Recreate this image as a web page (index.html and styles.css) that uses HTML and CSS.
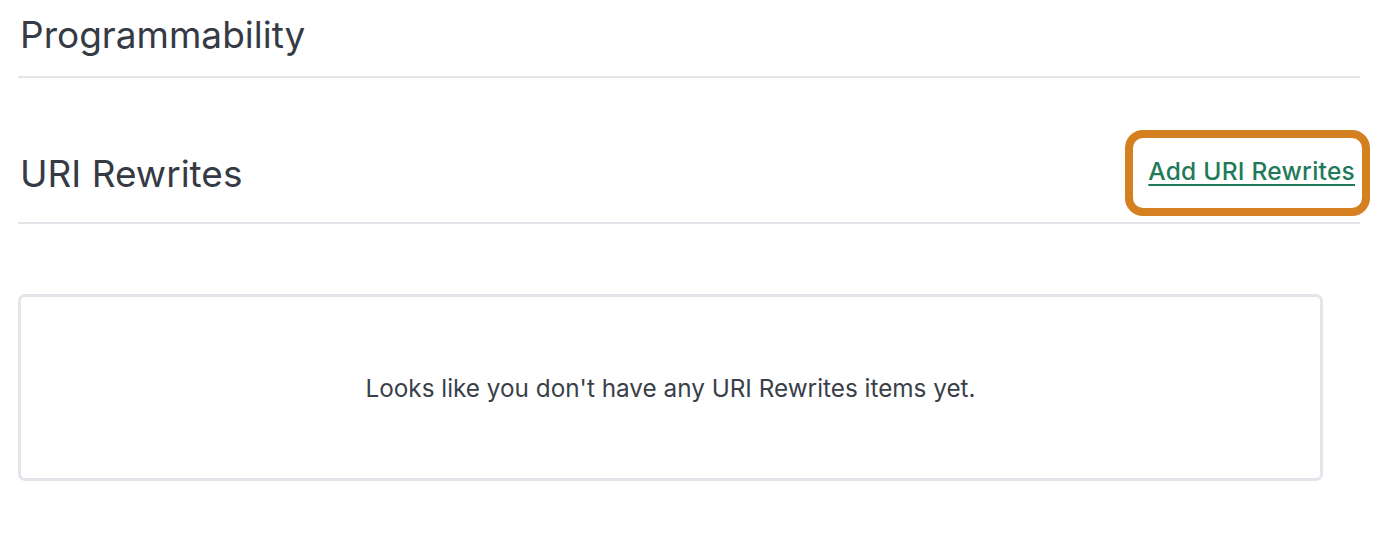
FILE: index.html
```html
<!DOCTYPE html>
<html>
<head>
<meta charset="utf-8">
<link rel="stylesheet" href="styles.css">
</head>
<body>
<div class="page">
  <div class="section-head first">
    <h2 class="title">Programmability</h2>
  </div>
  <div class="section-head second">
    <h2 class="title">URI Rewrites</h2>
    <a class="add-link" href="#">Add URI Rewrites</a>
  </div>
  <div class="empty-box">
    <p class="empty-text">Looks like you don't have any URI Rewrites items yet.</p>
  </div>
</div>
</body>
</html>
```
FILE: styles.css
```css
html, body {
  margin: 0;
  padding: 0;
  background: #ffffff;
}
.page {
  width: 1342px;
  margin-left: 18px;
  font-family: "Inter", "Liberation Sans", sans-serif;
  color: #353a45;
}
.section-head {
  display: flex;
  align-items: center;
  justify-content: space-between;
  border-bottom: 2px solid #e2e5e9;
}
.section-head.first {
  height: 76px;
  align-items: flex-start;
}
.section-head.first .title {
  margin-top: 11px;
}
.section-head.second {
  margin-top: 48px;
  height: 96px;
}
.title {
  margin: 0 0 0 2px;
  font-size: 37px;
  font-weight: 400;
  line-height: 48px;
  letter-spacing: 0;
}
.add-link {
  position: relative;
  margin-right: 5px;
  margin-bottom: 6px;
  font-size: 24.5px;
  line-height: 28px;
  font-weight: 500;
  letter-spacing: 0.25px;
  color: #1f7a5a;
  text-decoration: underline;
  text-underline-offset: 4px;
  text-decoration-thickness: 2px;
}
.add-link::after {
  content: "";
  position: absolute;
  left: -23px;
  right: -15px;
  top: -27px;
  bottom: -31px;
  border: 8px solid #d47f20;
  border-radius: 18px;
}
.empty-box {
  margin-top: 70px;
  width: 1299px;
  height: 181px;
  border: 3px solid #e2e6ea;
  border-radius: 7px;
  display: flex;
  align-items: center;
  justify-content: center;
}
.empty-text {
  margin: 0;
  font-size: 24.3px;
  color: #3a3f4a;
}
```
